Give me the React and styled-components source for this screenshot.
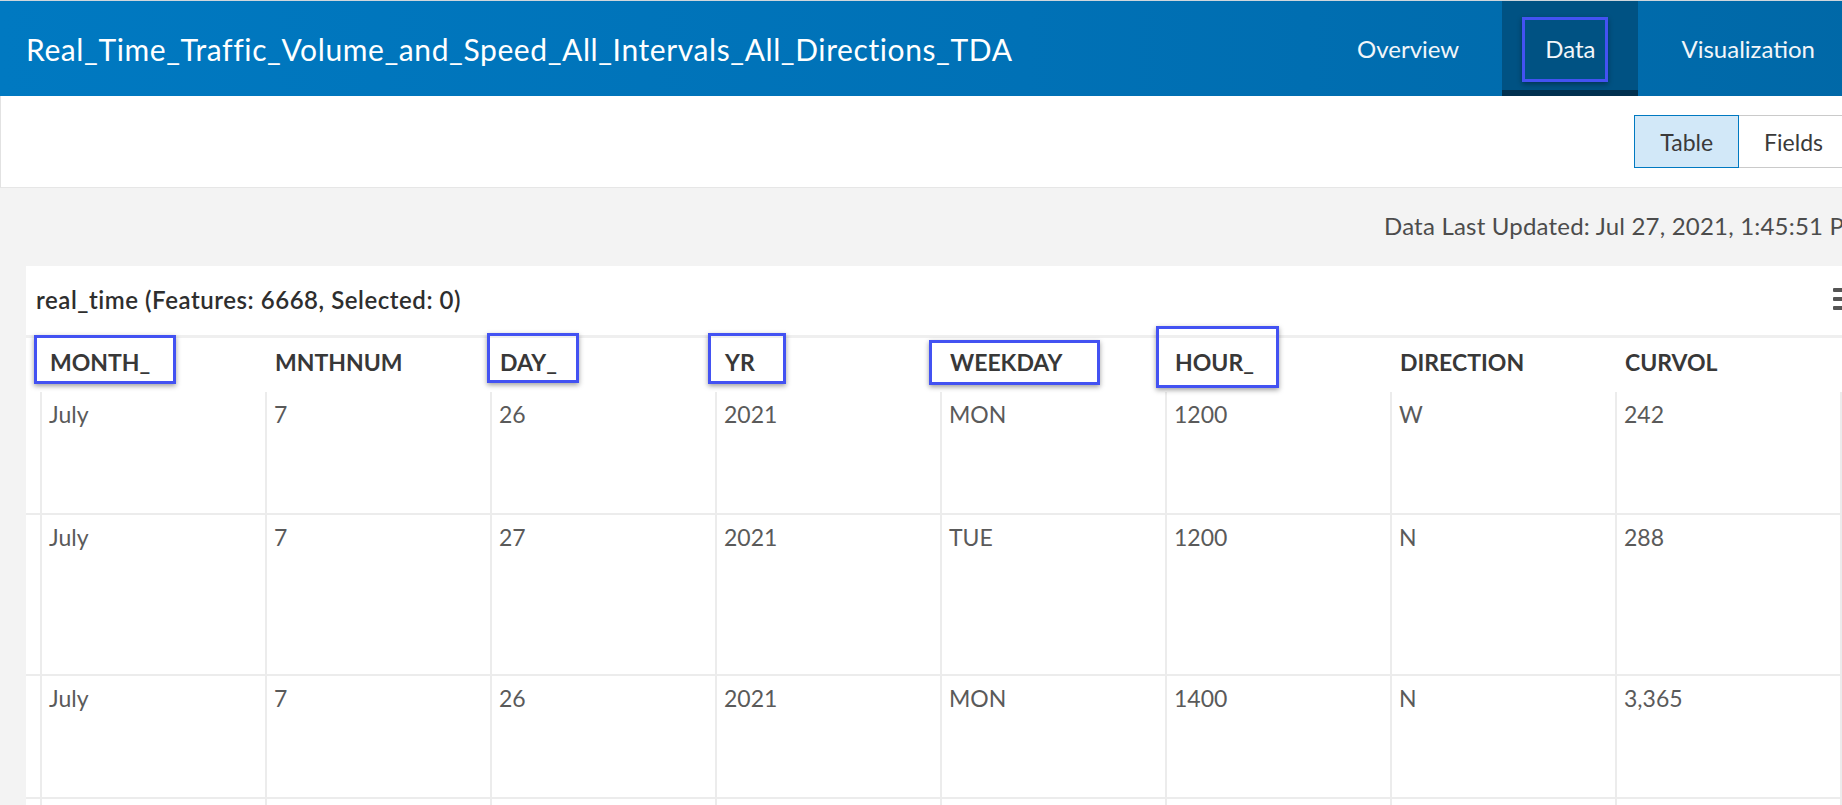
import styled, { createGlobalStyle } from 'styled-components';

const GlobalStyle = createGlobalStyle`
  html, body {
    margin: 0;
    padding: 0;
    overflow: hidden;
    background: #f3f3f3;
  }

  body {
    font-family: Lato, "Open Sans", Arial, sans-serif;
    color: #4a4a4a;
  }
`;

const Page = styled.div`
  width: 1866px;
  min-height: 805px;
  background: #f3f3f3;
`;

const TopBar = styled.header`
  height: 96px;
  display: flex;
  align-items: stretch;
  padding: 0 8px 0 26px;
  box-sizing: border-box;
  border-top: 1px solid #cfd6dc;
  background: linear-gradient(90deg, #0079c1 0%, #0071b6 55%, #0068a7 100%);
`;

const SiteTitle = styled.h1`
  flex: 1;
  margin: 0;
  display: flex;
  align-items: center;
  font-size: 30px;
  font-weight: 400;
  letter-spacing: 0.6px;
  color: #ffffff;
  white-space: nowrap;
`;

const Nav = styled.nav`
  display: flex;
  align-items: stretch;
`;

const NavTab = styled.a`
  position: relative;
  display: flex;
  align-items: center;
  padding: 0 43px;
  font-size: 24px;
  color: #f2f6fa;
  text-decoration: none;
  background: ${({ $active }) => ($active ? '#005283' : 'transparent')};
  box-shadow: ${({ $active }) => ($active ? 'inset 0 -6px 0 #00304f' : 'none')};
`;

/* blue call-out frame drawn over a tab or a column heading */
const Mark = styled.span`
  position: absolute;
  box-sizing: border-box;
  border: 3px solid #4352f2;
  box-shadow: 0 2px 5px rgba(0, 0, 0, 0.38);
  pointer-events: none;
`;

const SubBar = styled.div`
  height: 92px;
  display: flex;
  align-items: center;
  justify-content: flex-end;
  padding-right: 17px;
  box-sizing: border-box;
  background: #ffffff;
  border-left: 1px solid #e2e2e2;
  border-bottom: 1px solid #e6e6e6;
`;

const Toggle = styled.div`
  display: flex;
`;

const ToggleButton = styled.button`
  height: 53px;
  padding: 0 25px;
  font-family: inherit;
  font-size: 23px;
  color: #3a3a3a;
  background: ${({ $active }) => ($active ? '#d2e8f8' : '#ffffff')};
  border: 1px solid ${({ $active }) => ($active ? '#0079c1' : '#cacaca')};
  border-left-width: ${({ $active }) => ($active ? '1px' : '0')};
  cursor: pointer;
`;

const UpdatedLine = styled.div`
  height: 78px;
  display: flex;
  align-items: center;
  padding: 0 0 4px 1384px;
  box-sizing: border-box;
  font-size: 24px;
  letter-spacing: 0.2px;
  color: #4c4c4c;
  white-space: nowrap;
  overflow: hidden;
`;

const Card = styled.section`
  margin-left: 26px;
  background: #ffffff;
`;

const CardHead = styled.div`
  height: 72px;
  display: flex;
  align-items: center;
  justify-content: space-between;
  padding: 0 15px 3px 10px;
  box-sizing: border-box;
  border-bottom: 3px solid #efefef;
`;

const CardTitle = styled.h2`
  margin: 0;
  font-size: 24px;
  font-weight: 600;
  letter-spacing: 0.55px;
  color: #2e2e2e;
`;

const MenuIcon = () => (
  <svg width="18" height="22" viewBox="0 0 18 22" aria-hidden="true">
    <rect x="0" y="0" width="18" height="4" rx="1" fill="#555" />
    <rect x="0" y="9" width="18" height="4" rx="1" fill="#555" />
    <rect x="0" y="18" width="18" height="4" rx="1" fill="#555" />
  </svg>
);

const gridColumns = '14px repeat(8, 225px) 1fr';

const HeadRow = styled.div`
  display: grid;
  grid-template-columns: ${gridColumns};
  height: 54px;
`;

const HeadCell = styled.div`
  position: relative;
  padding: 11px 0 0 10px;
  font-size: 23px;
  font-weight: 700;
  line-height: 1.2;
  color: #383838;
  white-space: nowrap;
`;

const Row = styled.div`
  display: grid;
  grid-template-columns: ${gridColumns};
  height: ${({ $h }) => $h}px;
  box-sizing: border-box;
  border-bottom: 2px solid #ececec;
`;

const Gutter = styled.div``;

const Cell = styled.div`
  padding: 9px 0 0 7px;
  border-left: 2px solid #ececec;
  font-size: 23px;
  font-weight: 400;
  line-height: 1.2;
  color: #5a5a5a;
  white-space: nowrap;
`;

const columns = [
  { name: 'MONTH_', mark: { top: -3, left: -6, width: 142, height: 49 } },
  { name: 'MNTHNUM' },
  { name: 'DAY_', mark: { top: -5, left: -3, width: 92, height: 50 } },
  { name: 'YR', mark: { top: -5, left: -7, width: 78, height: 51 } },
  { name: 'WEEKDAY', mark: { top: 2, left: -11, width: 171, height: 45 } },
  { name: 'HOUR_', mark: { top: -12, left: -9, width: 123, height: 62 } },
  { name: 'DIRECTION' },
  { name: 'CURVOL' },
];

const rows = [
  { h: 123, values: ['July', '7', '26', '2021', 'MON', '1200', 'W', '242'] },
  { h: 161, values: ['July', '7', '27', '2021', 'TUE', '1200', 'N', '288'] },
  { h: 123, values: ['July', '7', '26', '2021', 'MON', '1400', 'N', '3,365'] },
  { h: 40, values: ['', '', '', '', '', '', '', ''] },
];

export default function App() {
  return (
    <Page>
      <GlobalStyle />
      <TopBar>
        <SiteTitle>Real_Time_Traffic_Volume_and_Speed_All_Intervals_All_Directions_TDA</SiteTitle>
        <Nav>
          <NavTab href="#overview">Overview</NavTab>
          <NavTab href="#data" $active>
            Data
            <Mark style={{ top: 16, left: 20, width: 86, height: 65 }} />
          </NavTab>
          <NavTab href="#visualization">Visualization</NavTab>
        </Nav>
      </TopBar>

      <SubBar>
        <Toggle>
          <ToggleButton $active>Table</ToggleButton>
          <ToggleButton>Fields</ToggleButton>
        </Toggle>
      </SubBar>

      <UpdatedLine>Data Last Updated: Jul 27, 2021, 1:45:51 PM</UpdatedLine>

      <Card>
        <CardHead>
          <CardTitle>real_time (Features: 6668, Selected: 0)</CardTitle>
          <MenuIcon />
        </CardHead>

        <HeadRow>
          <Gutter />
          {columns.map((col) => (
            <HeadCell key={col.name}>
              {col.name}
              {col.mark && <Mark style={col.mark} />}
            </HeadCell>
          ))}
          <Gutter />
        </HeadRow>

        {rows.map((row, i) => (
          <Row key={i} $h={row.h}>
            <Gutter />
            {row.values.map((v, j) => (
              <Cell key={j}>{v}</Cell>
            ))}
            <Cell />
          </Row>
        ))}
      </Card>
    </Page>
  );
}
